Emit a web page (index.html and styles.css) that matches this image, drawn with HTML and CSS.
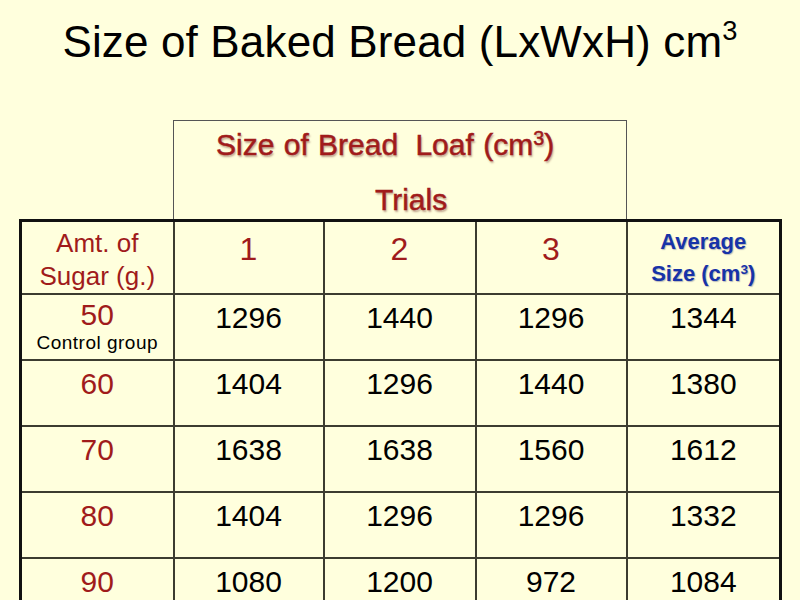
FILE: index.html
```html
<!DOCTYPE html>
<html lang="en">
<head>
<meta charset="utf-8">
<title>Size of Baked Bread</title>
<link rel="stylesheet" href="styles.css">
</head>
<body>
<h1 class="title">Size of Baked Bread (LxWxH) cm<sup>3</sup></h1>
<div class="trials-box">
  <div class="trials-line1">Size of Bread <span class="wide">Loaf</span> (cm<sup>3</sup>)</div>
  <div class="trials-line2">Trials</div>
</div>
<table class="data">
  <colgroup>
    <col class="c1"><col class="c2"><col class="c3"><col class="c4"><col class="c5">
  </colgroup>
  <tr class="head">
    <td class="amt">Amt. of<br>Sugar (g.)</td>
    <td class="trial">1</td>
    <td class="trial">2</td>
    <td class="trial">3</td>
    <td class="avg">Average<br>Size (cm<sup>3</sup>)</td>
  </tr>
  <tr>
    <td class="sugar first"><div class="sugar-val">50</div><div class="control">Control group</div></td>
    <td>1296</td><td>1440</td><td>1296</td><td>1344</td>
  </tr>
  <tr>
    <td class="sugar">60</td>
    <td>1404</td><td>1296</td><td>1440</td><td>1380</td>
  </tr>
  <tr>
    <td class="sugar">70</td>
    <td>1638</td><td>1638</td><td>1560</td><td>1612</td>
  </tr>
  <tr>
    <td class="sugar">80</td>
    <td>1404</td><td>1296</td><td>1296</td><td>1332</td>
  </tr>
  <tr>
    <td class="sugar">90</td>
    <td>1080</td><td>1200</td><td>972</td><td>1084</td>
  </tr>
</table>
</body>
</html>
```

FILE: styles.css
```css
html, body {
  margin: 0;
  padding: 0;
  background: #ffffdd;
  font-family: "Liberation Sans", Arial, sans-serif;
  color: #000;
  overflow: hidden;
}

.title {
  margin: 0;
  padding-top: 17px;
  height: 50px;
  line-height: 50px;
  font-size: 44px;
  font-weight: normal;
  text-align: center;
  letter-spacing: 0.15px;
}

.title sup {
  font-size: 62%;
  vertical-align: 0.62em;
  line-height: 0;
}

.trials-box {
  box-sizing: border-box;
  margin-top: 53px;
  margin-left: 173px;
  width: 454px;
  height: 99px;
  border: 1px solid #555;
  border-bottom: none;
  color: #a01b1b;
  font-size: 30px;
  -webkit-text-stroke: 0.5px #a01b1b;
  text-shadow: 1px 2px 2px rgba(110, 50, 40, 0.45);
}

.trials-box sup {
  font-size: 66%;
  vertical-align: 0.5em;
  line-height: 0;
}

.trials-line1 {
  line-height: 36px;
  padding-top: 6px;
  padding-left: 42px;
  word-spacing: 1px;
}

.wide {
  margin-left: 8px;
}

.trials-line2 {
  line-height: 36px;
  margin-top: 19px;
  padding-left: 201px;
}

.data {
  margin-left: 19px;
  width: 760px;
  border-collapse: collapse;
  table-layout: fixed;
  border: 3px solid #111;
}

.c1 { width: 153px; }
.c2 { width: 150px; }
.c3 { width: 152px; }
.c4 { width: 151px; }
.c5 { width: 154px; }

.data td {
  border: 2px solid #3c3c30;
  height: 66px;
  box-sizing: border-box;
  padding: 5px 0 0 0;
  vertical-align: top;
  text-align: center;
  font-size: 30px;
  line-height: 36px;
}

.data tr.head td {
  height: 71px;
}

.data td.amt {
  color: #a01b1b;
  font-size: 26px;
  line-height: 33px;
  padding-top: 5px;
}

.data td.trial {
  color: #a01b1b;
  font-size: 32px;
  padding-top: 9px;
}

.data td.avg {
  color: #1733a8;
  font-size: 22px;
  font-weight: bold;
  line-height: 32px;
  padding-top: 4px;
  text-shadow: 1px 1px 1px rgba(60, 60, 120, 0.35);
}

.data td.avg sup {
  font-size: 62%;
  vertical-align: 0.55em;
  line-height: 0;
}

.data td.sugar {
  color: #a01b1b;
}

.data td.first {
  padding-top: 7px;
}

.sugar-val {
  line-height: 26px;
}

.control {
  color: #000;
  font-size: 19px;
  letter-spacing: 0.5px;
  line-height: 29px;
}
```
